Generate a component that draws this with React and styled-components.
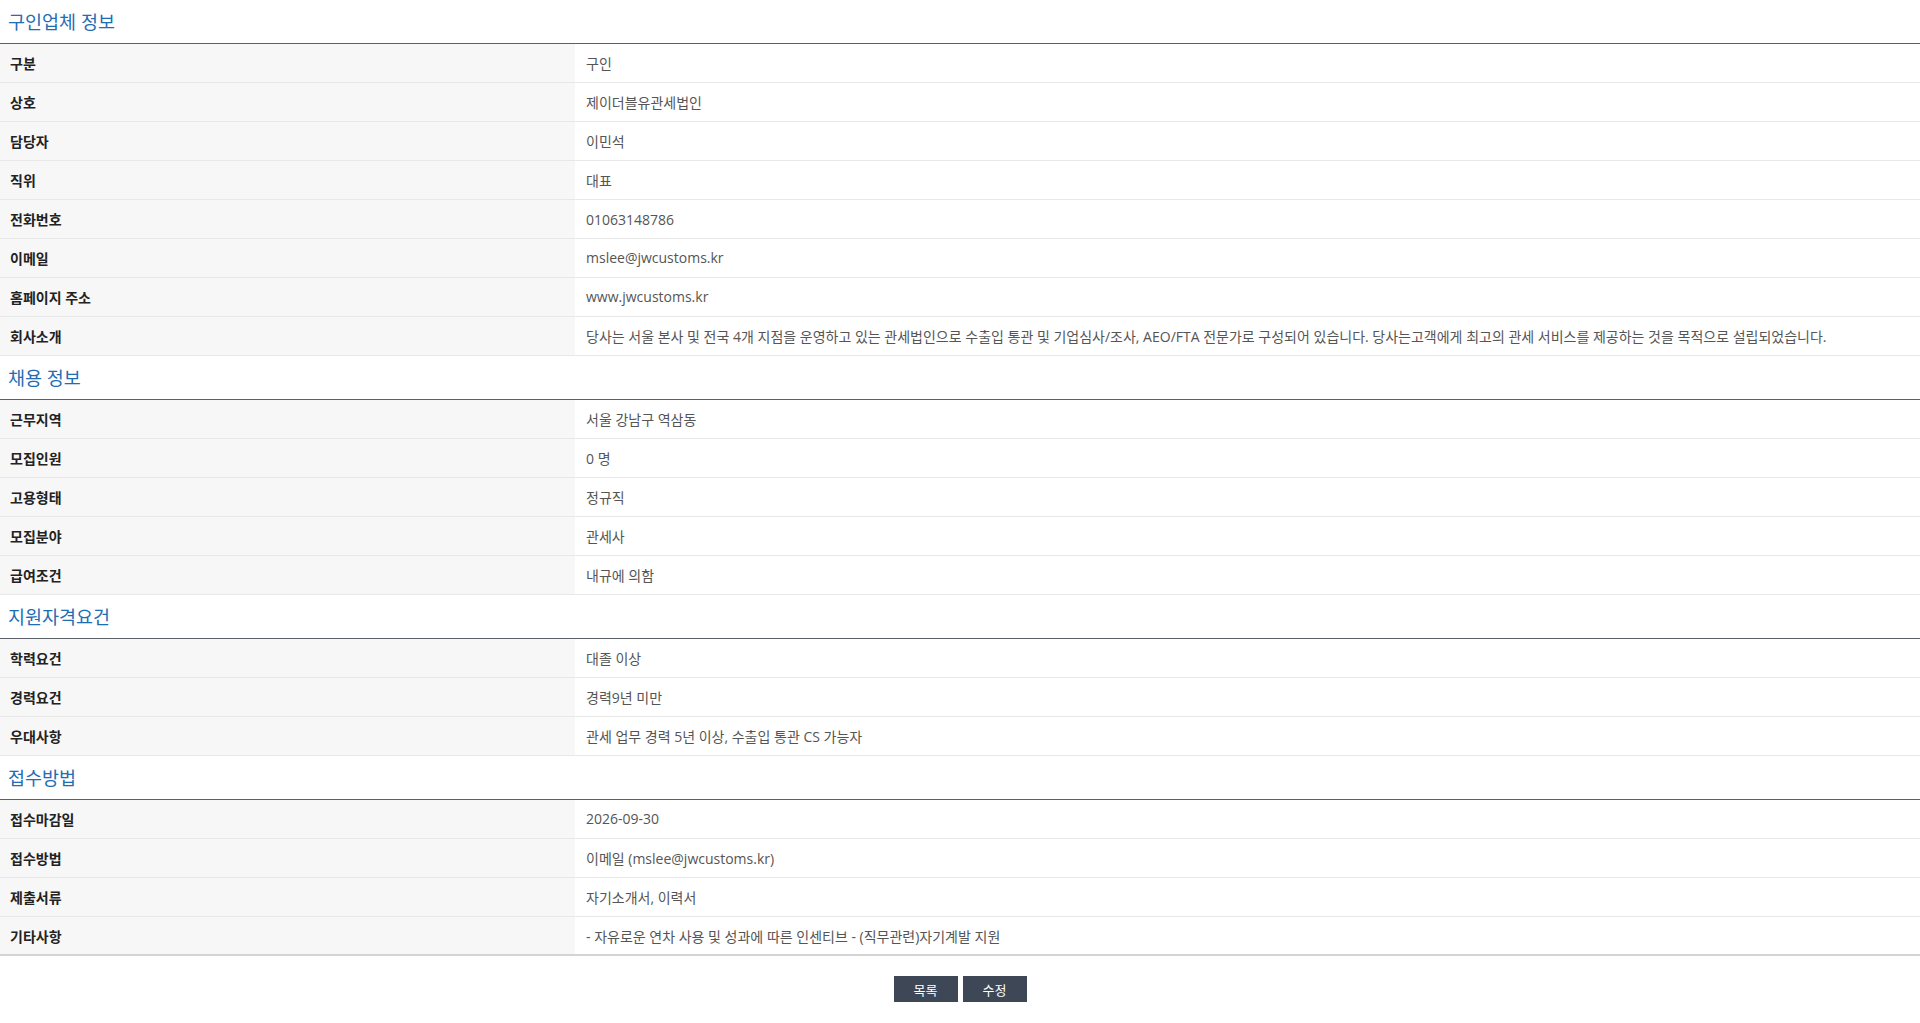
import React from 'react'
import styled, { createGlobalStyle } from 'styled-components'

const GlobalStyle = createGlobalStyle`
  html, body {
    margin: 0;
    padding: 0;
    background: #fff;
    font-family: "Open Sans", "Noto Sans CJK KR", sans-serif;
  }
`

const Page = styled.div`
  width: 100%;
`

const SectionTitle = styled.h3`
  margin: 0;
  height: 43px;
  line-height: 44px;
  padding-left: 8px;
  font-size: 18.5px;
  font-weight: 400;
  color: #1f6db3;
  border-bottom: 1px solid #5b5f66;
`

const Table = styled.table`
  width: 100%;
  border-collapse: collapse;
  table-layout: fixed;
  border-bottom: ${props => (props.last ? '2px solid #d4d4d4' : 'none')};
`

const Row = styled.tr`
  height: 38.9px;
  border-bottom: 1px solid #e8e8e8;

  &:last-child {
    border-bottom: ${props => (props.last ? 'none' : '1px solid #e8e8e8')};
  }
`

const Label = styled.th`
  width: 575px;
  padding: 0 0 0 10px;
  box-sizing: border-box;
  text-align: left;
  background: #f7f7f7;
  font-size: 14px;
  font-weight: 700;
  color: #222;
`

const Value = styled.td`
  padding: 0 0 0 11px;
  font-size: 14px;
  color: #555;
`

const Buttons = styled.div`
  display: flex;
  justify-content: center;
  gap: 5px;
  padding-top: 20px;
`

const Button = styled.button`
  width: 64px;
  height: 26px;
  border: 0;
  background: #3e4756;
  color: #fff;
  font-family: "Open Sans", "Noto Sans CJK KR", sans-serif;
  font-size: 13px;
  padding: 0;
  cursor: pointer;
`

const sections = [
  {
    title: '구인업체 정보',
    rows: [
      ['구분', '구인'],
      ['상호', '제이더블유관세법인'],
      ['담당자', '이민석'],
      ['직위', '대표'],
      ['전화번호', '01063148786'],
      ['이메일', 'mslee@jwcustoms.kr'],
      ['홈페이지 주소', 'www.jwcustoms.kr'],
      [
        '회사소개',
        '당사는 서울 본사 및 전국 4개 지점을 운영하고 있는 관세법인으로 수출입 통관 및 기업심사/조사, AEO/FTA 전문가로 구성되어 있습니다. 당사는고객에게 최고의 관세 서비스를 제공하는 것을 목적으로 설립되었습니다.',
      ],
    ],
  },
  {
    title: '채용 정보',
    rows: [
      ['근무지역', '서울 강남구 역삼동'],
      ['모집인원', '0 명'],
      ['고용형태', '정규직'],
      ['모집분야', '관세사'],
      ['급여조건', '내규에 의함'],
    ],
  },
  {
    title: '지원자격요건',
    rows: [
      ['학력요건', '대졸 이상'],
      ['경력요건', '경력9년 미만'],
      ['우대사항', '관세 업무 경력 5년 이상, 수출입 통관 CS 가능자'],
    ],
  },
  {
    title: '접수방법',
    rows: [
      ['접수마감일', '2026-09-30'],
      ['접수방법', '이메일 (mslee@jwcustoms.kr)'],
      ['제출서류', '자기소개서, 이력서'],
      ['기타사항', '- 자유로운 연차 사용 및 성과에 따른 인센티브 - (직무관련)자기계발 지원'],
    ],
  },
]

const App = () => {
  return (
    <Page>
      <GlobalStyle />
      {sections.map((section, i) => {
        const last = i === sections.length - 1
        return (
          <section key={section.title}>
            <SectionTitle>{section.title}</SectionTitle>
            <Table last={last}>
              <tbody>
                {section.rows.map(([label, value]) => (
                  <Row key={label} last={last}>
                    <Label>{label}</Label>
                    <Value>{value}</Value>
                  </Row>
                ))}
              </tbody>
            </Table>
          </section>
        )
      })}
      <Buttons>
        <Button>목록</Button>
        <Button>수정</Button>
      </Buttons>
    </Page>
  )
}

export default App
